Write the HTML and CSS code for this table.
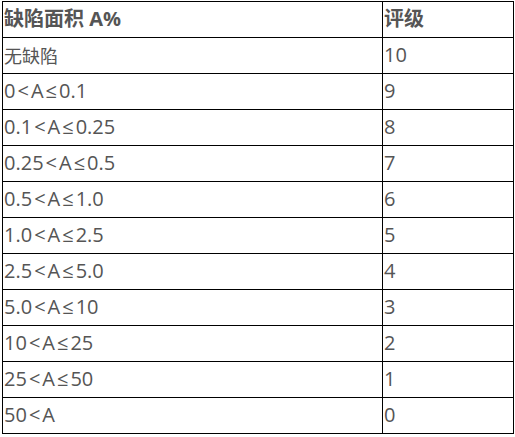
FILE: index.html
```html
<!DOCTYPE html>
<html lang="zh">
<head>
<meta charset="utf-8">
<link rel="stylesheet" href="styles.css">
</head>
<body>
<table class="grade-table">
  <thead>
    <tr><th class="col-area"><span class="cjk">缺陷面积</span> A%</th><th class="col-grade"><span class="cjk">评级</span></th></tr>
  </thead>
  <tbody>
    <tr><td><span class="cjk">无缺陷</span></td><td>10</td></tr>
    <tr><td>0<span class="op">&lt;</span>A<span class="op">≤</span>0.1</td><td>9</td></tr>
    <tr><td>0.1<span class="op">&lt;</span>A<span class="op">≤</span>0.25</td><td>8</td></tr>
    <tr><td>0.25<span class="op">&lt;</span>A<span class="op">≤</span>0.5</td><td>7</td></tr>
    <tr><td>0.5<span class="op">&lt;</span>A<span class="op">≤</span>1.0</td><td>6</td></tr>
    <tr><td>1.0<span class="op">&lt;</span>A<span class="op">≤</span>2.5</td><td>5</td></tr>
    <tr><td>2.5<span class="op">&lt;</span>A<span class="op">≤</span>5.0</td><td>4</td></tr>
    <tr><td>5.0<span class="op">&lt;</span>A<span class="op">≤</span>10</td><td>3</td></tr>
    <tr><td>10<span class="op">&lt;</span>A<span class="op">≤</span>25</td><td>2</td></tr>
    <tr><td>25<span class="op">&lt;</span>A<span class="op">≤</span>50</td><td>1</td></tr>
    <tr><td>50<span class="op">&lt;</span>A</td><td>0</td></tr>
  </tbody>
</table>
</body>
</html>
```

FILE: styles.css
```css
html, body {
  margin: 0;
  padding: 0;
  background: #fff;
}
body {
  padding: 1px 0 0 2px;
  font-family: "Open Sans", "Noto Sans CJK SC", sans-serif;
  color: #555;
}
.grade-table {
  border-collapse: collapse;
  width: 511px;
  table-layout: fixed;
}
.grade-table th,
.grade-table td {
  border: 1px solid #000;
  height: 36px;
  padding: 0 0 1px 1px;
  box-sizing: border-box;
  font-size: 20px;
  line-height: 24px;
  text-align: left;
  vertical-align: middle;
  font-weight: normal;
}
.grade-table th {
  font-weight: bold;
  padding-bottom: 3px;
}
.cjk {
  font-family: "Noto Sans CJK SC", sans-serif;
  font-size: 18px;
}
.grade-table th .cjk {
  font-size: 20px;
}
.op {
  padding: 0 2px;
}
.col-area {
  width: 380px;
}
.col-grade {
  width: 131px;
}
```
